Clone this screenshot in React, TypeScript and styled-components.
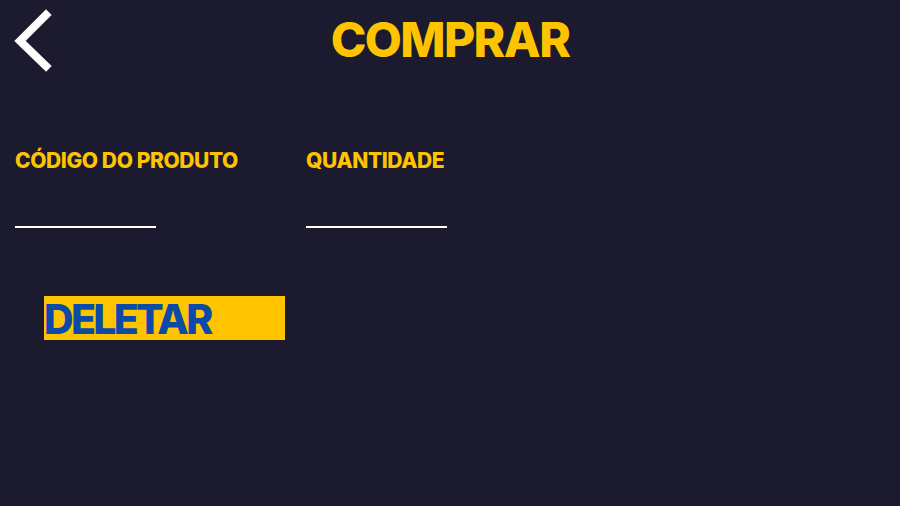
import React from "react";
import styled, { createGlobalStyle } from "styled-components";

const Global = createGlobalStyle`
  html, body { margin: 0; padding: 0; background: #1c1a2e; }
  body { font-family: "Inter", "Noto Sans", sans-serif; }
  * { box-sizing: border-box; }
`;

const Page = styled.div`
  width: 900px;
  height: 506px;
  background: #1c1a2e;
  display: flex;
  flex-direction: column;
`;

const Header = styled.header`
  position: relative;
  height: 82px;
  display: flex;
  align-items: center;
  justify-content: center;
`;

const BackButton = styled.button`
  position: absolute;
  left: 12px;
  top: 9px;
  width: 42px;
  height: 64px;
  padding: 0;
  border: none;
  background: transparent;
  cursor: pointer;
  display: flex;
  align-items: center;
  justify-content: center;
`;

const Title = styled.h1`
  margin: 0;
  margin-top: -4px;
  font-family: "Inter", sans-serif;
  font-weight: 800;
  font-size: 48px;
  letter-spacing: -1.6px;
  color: #ffc400;
`;

const Form = styled.div`
  display: grid;
  grid-template-columns: 291px 291px;
  padding: 67px 0 0 15px;
`;

const Field = styled.label`
  display: flex;
  flex-direction: column;
  align-items: flex-start;
`;

const Label = styled.span`
  font-family: "Inter", sans-serif;
  font-weight: 800;
  font-size: 21px;
  letter-spacing: -0.4px;
  color: #ffc400;
  line-height: 24px;
`;

const Input = styled.input`
  margin-top: 31px;
  width: 141px;
  height: 24px;
  border: none;
  border-bottom: 2px solid #ffffff;
  background: transparent;
  color: #ffffff;
  outline: none;
  padding: 0;
  font-size: 16px;
`;

const DeleteButton = styled.button`
  margin: 68px 0 0 44px;
  width: 241px;
  height: 44px;
  padding: 0;
  border: none;
  background: #ffc400;
  color: #0b4aa8;
  font-family: "Inter", sans-serif;
  font-weight: 800;
  font-size: 41px;
  letter-spacing: -2.7px;
  text-align: left;
  line-height: 46px;
  cursor: pointer;
  align-self: flex-start;
`;

export default function App() {
  return (
    <Page>
      <Global />
      <Header>
        <BackButton aria-label="Voltar">
          <svg width="42" height="64" viewBox="0 0 42 64">
            <polyline
              points="34,6 8,32 34,57"
              fill="none"
              stroke="#ffffff"
              strokeWidth="8"
              strokeLinecap="square"
            />
          </svg>
        </BackButton>
        <Title>COMPRAR</Title>
      </Header>
      <Form>
        <Field>
          <Label>CÓDIGO DO PRODUTO</Label>
          <Input />
        </Field>
        <Field>
          <Label>QUANTIDADE</Label>
          <Input />
        </Field>
      </Form>
      <DeleteButton>DELETAR</DeleteButton>
    </Page>
  );
}
